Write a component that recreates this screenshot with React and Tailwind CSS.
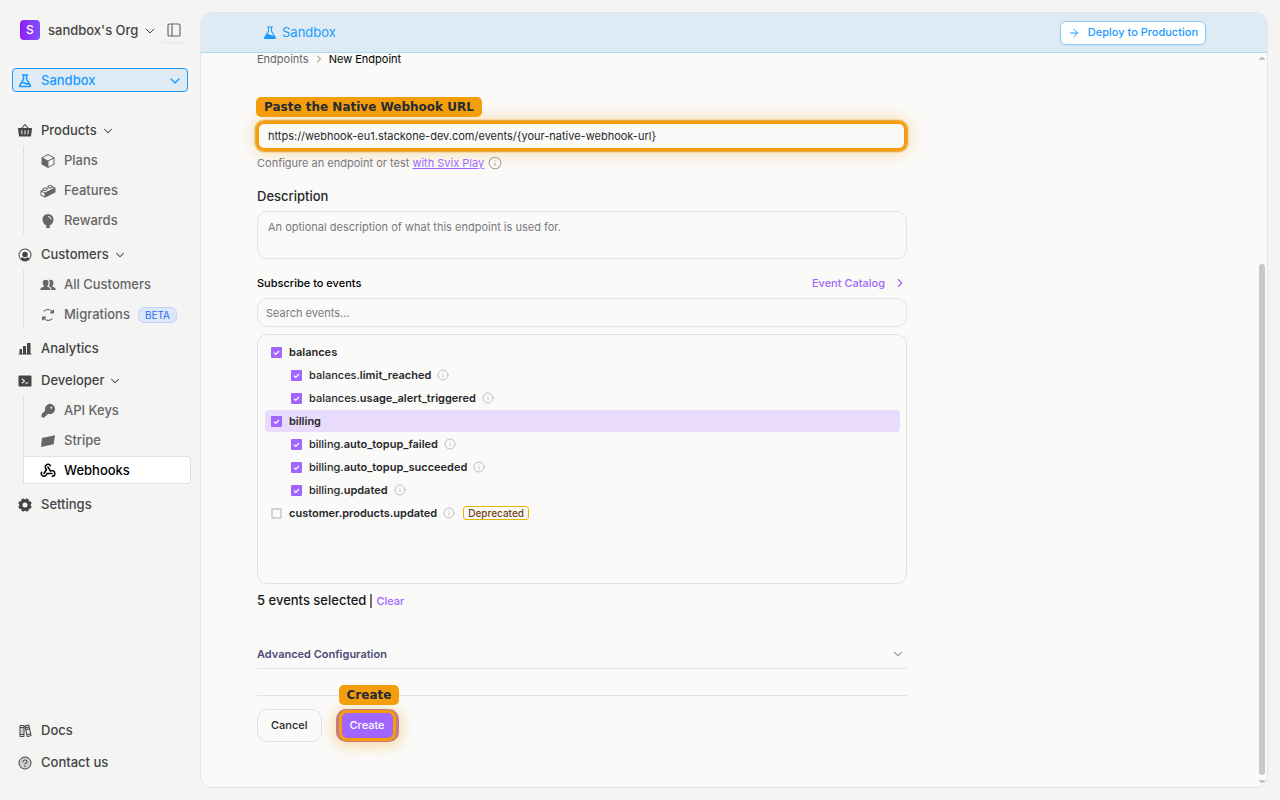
import React, { useState } from 'react';
import { ChevronDown, ChevronRight, ArrowRight, PanelLeft, Info } from 'lucide-react';
import {
    PiBasketFill,
    PiCubeFill,
    PiLegoFill,
    PiBalloonFill,
    PiUserCircleFill,
    PiArrowsClockwiseFill,
    PiChartBarFill,
    PiTerminalWindowFill,
    PiKeyFill,
    PiWebhooksLogoBold,
    PiGearFill,
    PiBooksDuotone,
    PiQuestionDuotone,
    PiFlaskBold,
    PiFlaskFill,
} from 'react-icons/pi';

const StripeIcon = ({ className }) => (
    <svg viewBox="0 0 16 16" className={className} fill="currentColor" aria-hidden="true">
        <path d="M2 5 15 2.3 13.7 11.3 1 14Z" />
    </svg>
);

const PeopleIcon = ({ className }) => (
    <svg viewBox="0 0 16 16" className={className} fill="currentColor" aria-hidden="true">
        <path d="M5.7 2.8c1.8 0 2.9 1.2 2.9 3 0 1.3-.5 2.3-1.2 3v.9c1.8.5 3.2 1.200 3.200 3.300H.2c0-2.100 1.500-2.800 3.700-3.300v-.9c-.7-.7-1.200-1.700-1.200-3 0-1.800 1.200-3 3-3Z" />
        <path d="M10.600 2.800c1.800 0 2.900 1.200 2.900 3 0 1.300-.5 2.300-1.200 3v.9c2 .5 3.500 1.200 3.500 3.300h-4.300c0-2-.9-3.100-2.600-3.800.5-.8.900-1.900.9-3.400 0-1.100-.3-2-.9-2.700.5-.2 1-.3 1.700-.3Z" />
    </svg>
);

const navGroups = [
    {
        label: 'Products',
        icon: PiBasketFill,
        items: [
            { label: 'Plans', icon: PiCubeFill },
            { label: 'Features', icon: PiLegoFill },
            { label: 'Rewards', icon: PiBalloonFill },
        ],
    },
    {
        label: 'Customers',
        icon: PiUserCircleFill,
        items: [
            { label: 'All Customers', icon: PeopleIcon },
            { label: 'Migrations', icon: PiArrowsClockwiseFill, badge: 'BETA' },
        ],
    },
    { label: 'Analytics', icon: PiChartBarFill },
    {
        label: 'Developer',
        icon: PiTerminalWindowFill,
        items: [
            { label: 'API Keys', icon: PiKeyFill },
            { label: 'Stripe', icon: StripeIcon },
            { label: 'Webhooks', icon: PiWebhooksLogoBold, active: true },
        ],
    },
    { label: 'Settings', icon: PiGearFill },
];

const footerLinks = [
    { label: 'Docs', icon: PiBooksDuotone },
    { label: 'Contact us', icon: PiQuestionDuotone },
];

const eventRows = [
    { id: 'balances', name: 'balances', group: true },
    { id: 'balances.limit_reached', prefix: 'balances.', name: 'limit_reached' },
    { id: 'balances.usage_alert_triggered', prefix: 'balances.', name: 'usage_alert_triggered' },
    { id: 'billing', name: 'billing', group: true, highlighted: true },
    { id: 'billing.auto_topup_failed', prefix: 'billing.', name: 'auto_topup_failed' },
    { id: 'billing.auto_topup_succeeded', prefix: 'billing.', name: 'auto_topup_succeeded' },
    { id: 'billing.updated', prefix: 'billing.', name: 'updated' },
    { id: 'customer.products.updated', name: 'customer.products.updated', deprecated: true },
];

const leafIds = eventRows.filter((row) => !row.group).map((row) => row.id);

const NavLink = ({ label, icon: Icon }) => (
    <a href="#" className="flex h-7 items-center gap-2 pt-0.5 pl-[5px] text-[#444444]">
        <Icon className="h-4 w-4" />
        {label}
    </a>
);

const NavGroup = ({ label, icon: Icon, items }) => (
    <div className="flex flex-col gap-0.5 pb-0.5">
        <button type="button" className="flex h-7 items-center gap-2 pt-0.5 pl-[5px] text-[#444444]">
            <Icon className="h-4 w-4" />
            <span className="flex items-center gap-1">
                {label}
                <ChevronDown className="h-3.5 w-3.5" strokeWidth={1.75} />
            </span>
        </button>
        <div className="ml-[11px] flex flex-col gap-0.5 border-l border-[#dfdfde]">
            {items.map(({ label: text, icon: ItemIcon, badge, active }) => (
                <a
                    key={text}
                    href="#"
                    className={`flex h-7 items-center gap-2 pt-0.5 pl-4 ${active ? '-mr-[3px] rounded-r border border-l-0 border-[#e2e2e2] bg-white text-black' : 'text-[#666666]'}`}
                >
                    <ItemIcon className="h-4 w-4" />
                    {text}
                    {badge && (
                        <span className="flex h-4 items-center rounded-md border border-[#bcd6fb] bg-[#dde7f8] px-1.5 text-[10px] font-normal text-[#2b6cf3]">
                            {badge}
                        </span>
                    )}
                </a>
            ))}
        </div>
    </div>
);

const Sidebar = () => (
    <aside className="flex w-[200px] shrink-0 flex-col px-3 pt-5 pb-6 text-[13px] font-medium">
        <div className="flex h-5 items-center pl-2">
            <button type="button" className="flex items-center gap-2 text-[#444444]">
                <span className="flex h-5 w-5 items-center justify-center rounded bg-linear-to-r from-[#9217f8] to-[#7c4dff] text-xs text-white">S</span>
                <span className="flex items-center gap-1 pt-0.5">
                    sandbox's Org
                    <ChevronDown className="h-4 w-4" strokeWidth={1.5} />
                </span>
            </button>
            <button type="button" aria-label="Toggle sidebar" className="mr-0.5 ml-auto rounded p-1 text-[#666666] shadow-sm shadow-black/5">
                <PanelLeft className="h-4 w-4" strokeWidth={1.75} />
            </button>
        </div>

        <button type="button" className="mt-7 flex h-6 items-center gap-2 rounded border border-[#1a9bff] bg-[#deebf5] px-1 pt-0.5 text-[#1a9bff]">
            <PiFlaskBold className="h-4 w-4" />
            Sandbox
            <ChevronDown className="ml-auto h-4 w-4" strokeWidth={2} />
        </button>

        <nav className="mt-6 flex flex-col gap-1">
            {navGroups.map((group) =>
                group.items ? <NavGroup key={group.label} {...group} /> : <NavLink key={group.label} {...group} />
            )}
        </nav>

        <div className="mt-auto flex flex-col gap-1">
            {footerLinks.map((link) => (
                <NavLink key={link.label} {...link} />
            ))}
        </div>
    </aside>
);

const Checkbox = ({ id, checked, onChange }) => (
    <span className="grid h-[11px] w-[11px] place-items-center">
        <input
            id={id}
            type="checkbox"
            checked={checked}
            onChange={onChange}
            className="col-start-1 row-start-1 h-[11px] w-[11px] appearance-none rounded-[1px] border-2 border-[#d4d4d8] checked:border-[#a066ff] checked:bg-[#a066ff]"
        />
        {checked && (
            <svg viewBox="0 0 11 11" className="pointer-events-none col-start-1 row-start-1 h-[11px] w-[11px]" fill="none" stroke="white" strokeWidth="1.2">
                <path d="M3 5.6 4.8 7.3 8 4" />
            </svg>
        )}
    </span>
);

const EventRow = ({ row, checked, onToggle }) => (
    <li className={`flex h-[22px] items-center rounded pr-2 ${row.prefix ? 'pl-[26px]' : 'pl-1.5'} ${row.highlighted ? 'bg-[#e9dbfb]' : ''}`}>
        <Checkbox id={row.id} checked={checked} onChange={() => onToggle(row)} />
        <label htmlFor={row.id} className="pl-[7px] font-medium text-[#27272a]">
            {row.prefix}
            <span className="font-semibold">{row.name}</span>
        </label>
        {!row.group && <Info className="ml-1.5 h-3 w-3 text-[#b5b5b9]" strokeWidth={1.75} />}
        {row.deprecated && (
            <span className="ml-2 flex h-3.5 items-center rounded-[3px] border border-[#eab308] px-1 text-[10px] font-medium text-[#713f12]">
                Deprecated
            </span>
        )}
    </li>
);

const Callout = ({ children }) => (
    <span className="rounded-[5px] bg-[#f59e0b] px-2 font-['DejaVu_Sans'] text-xs leading-5 font-bold whitespace-nowrap text-[#1f2937]">
        {children}
    </span>
);

const EndpointForm = () => {
    const [url, setUrl] = useState('https://webhook-eu1.stackone-dev.com/events/{your-native-webhook-url}');
    const [selected, setSelected] = useState(leafIds.filter((id) => id !== 'customer.products.updated'));

    const childrenOf = (row) => (row.group ? leafIds.filter((id) => id.startsWith(`${row.id}.`)) : [row.id]);
    const isChecked = (row) => childrenOf(row).every((id) => selected.includes(id));

    const handleToggle = (row) => {
        const ids = childrenOf(row);
        const rest = selected.filter((id) => !ids.includes(id));
        setSelected(isChecked(row) ? rest : [...rest, ...ids]);
    };

    return (
        <form className="flex max-w-[650px] flex-col" onSubmit={(e) => e.preventDefault()}>
            <div className="-ml-px flex flex-col items-start gap-1">
                <Callout>Paste the Native Webhook URL</Callout>
                <input
                    type="text"
                    aria-label="Endpoint URL"
                    value={url}
                    onChange={(e) => setUrl(e.target.value)}
                    className="h-[30px] w-full rounded-lg border-[3px] border-[#f59e0b] px-[9px] text-[11px] text-[#27272a] shadow-[0_0_0_1px_rgba(217,140,20,0.6),0_0_0_2px_rgba(245,158,11,0.25),0_0_18px_rgba(245,158,11,0.4)] outline-none"
                />
            </div>
            <p className="mt-1 flex h-4 items-center text-[#78787f]">
                Configure an endpoint or test&nbsp;
                <a href="#" className="text-[#a066ff] underline">with Svix Play</a>
                <Info className="ml-1 h-3.5 w-3.5 text-[#a1a1aa]" strokeWidth={1.75} />
            </p>

            <label htmlFor="description" className="mt-[15px] text-[13px] leading-5 font-medium text-[#27272a]">
                Description
            </label>
            <textarea
                id="description"
                placeholder="An optional description of what this endpoint is used for."
                className="mt-[5px] h-12 resize-none rounded-[10px] border border-[#e4e4e7] px-2.5 py-[7px] leading-4 placeholder:text-[#78787f]"
            />

            <div className="mt-4 flex h-4 items-center justify-between">
                <label htmlFor="search" className="font-medium text-black">Subscribe to events</label>
                <a href="#" className="flex items-center gap-2 font-medium text-[#a066ff]">
                    Event Catalog
                    <ChevronRight className="h-3.5 w-3.5" strokeWidth={2} />
                </a>
            </div>
            <input
                id="search"
                type="text"
                placeholder="Search events..."
                className="mt-[7px] h-[29px] rounded-[10px] border border-[#e4e4e7] px-2 placeholder:text-[#78787f]"
            />
            <ul className="mt-[7px] flex h-[250px] flex-col gap-px rounded-[10px] border border-[#e2e0ea] py-1.5 pr-1.5 pl-[7px]">
                {eventRows.map((row) => (
                    <EventRow key={row.id} row={row} checked={isChecked(row)} onToggle={handleToggle} />
                ))}
            </ul>

            <div className="mt-[7px] flex h-5 items-center text-[13px] font-medium text-[#18181b]">
                {selected.length} events selected
                <span className="mx-1 h-3.5 w-0.5 bg-[#71717a]" />
                <button type="button" onClick={() => setSelected([])} className="text-[11px] text-[#a066ff]">Clear</button>
            </div>

            <button type="button" className="mt-[29px] flex h-[29px] items-center justify-between border-b border-[#e4e4e7] pr-0.5 font-semibold text-[#4b4b75]">
                Advanced Configuration
                <ChevronDown className="h-3.5 w-3.5 text-[#a1a1aa]" strokeWidth={2} />
            </button>

            <div className="mt-[26px] flex gap-3.5 border-t border-[#e4e4e7] pt-[13px] font-medium">
                <button type="button" className="h-[33px] rounded-[10px] border border-[#e2e0ea] px-[13px] text-[#27272a]">Cancel</button>
                <div className="relative">
                    <button
                        type="submit"
                        className="flex h-[33px] rounded-[10px] bg-[#c77b84] px-[3px] py-px text-white shadow-[0_2px_14px_2px_rgba(245,158,11,0.35)]"
                    >
                        <span className="flex h-full items-center rounded-lg border-[3px] border-[#f59e0b] bg-[#a066ff] px-2">Create</span>
                    </button>
                    <div className="absolute -top-6 left-[3px] flex h-5">
                        <Callout>Create</Callout>
                    </div>
                </div>
            </div>
        </form>
    );
};

const ScrollTrack = () => (
    <div className="flex w-2 shrink-0 flex-col pt-1 pr-0.5 pb-1" aria-hidden="true">
        <svg viewBox="0 0 6 3" className="h-[3px] w-1.5" fill="#c4c4c4"><path d="M0 3V2L2 0H4L6 2V3Z" /></svg>
        <div className="flex-[204]" />
        <div className="flex-[511] rounded-full bg-[#c8c8c7]" />
        <svg viewBox="0 0 6 3" className="mt-[5px] h-[3px] w-1.5" fill="#c4c4c4"><path d="M0 0V1L2 3H4L6 1V0Z" /></svg>
    </div>
);

const App = () => (
    <div className="flex h-screen bg-[#f4f4f3] font-['Inter',sans-serif]">
        <Sidebar />
        <main className="mt-3 mr-3 mb-3 flex min-w-0 flex-1 flex-col overflow-hidden rounded-xl border border-[#e4e4e4] bg-[#fafaf9]">
            <header className="flex h-10 shrink-0 items-center border-b border-[#a9d8f8] bg-[#deebf5] pr-[61px] pl-[61px]">
                <span className="flex items-center gap-1 text-[13px] text-[#1a9bff]">
                    <PiFlaskFill className="h-4 w-4" />
                    Sandbox
                </span>
                <button type="button" className="ml-auto flex h-6 items-center gap-2 rounded-md border border-[#8acbfb] bg-white px-[7px] text-[11px] font-medium text-[#1a9bff] shadow-sm shadow-black/5">
                    <ArrowRight className="h-3 w-3" strokeWidth={2} />
                    Deploy to Production
                </button>
            </header>
            <div className="flex min-h-0 flex-1">
                <div className="flex-1 overflow-hidden pr-14 pl-14 text-[11px]">
                    <div className="flex h-3 items-center gap-1">
                        <a href="#" className="text-[#66666e]">Endpoints</a>
                        <ChevronRight className="h-3 w-3 text-[#78787f]" strokeWidth={2} />
                        <span className="text-black">New Endpoint</span>
                    </div>
                    <div className="pt-8">
                        <EndpointForm />
                    </div>
                </div>
                <ScrollTrack />
            </div>
        </main>
    </div>
);

export default App;
